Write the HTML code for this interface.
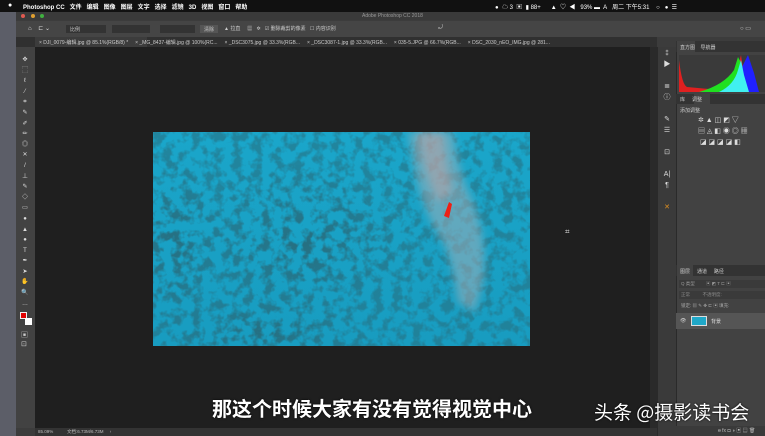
<!DOCTYPE html>
<html><head><meta charset="utf-8"><style>
*{margin:0;padding:0;box-sizing:border-box}
body{width:765px;height:436px;overflow:hidden;background:#5c5e68;font-family:"Liberation Sans","Noto Sans CJK SC",sans-serif;position:relative;color:#ccc}
.a{position:absolute}
.t{font-size:6px;white-space:nowrap}
</style></head><body>
<div class="a" style="left:0;top:0;width:765px;height:12px;background:#111"></div>
<div class="a t" style="left:8px;top:2px;color:#fff;font-size:7px">●</div>
<div class="a t" style="left:23px;top:2px;color:#fff;font-weight:bold">Photoshop CC&nbsp;&nbsp; 文件&nbsp;&nbsp; 编辑&nbsp;&nbsp; 图像&nbsp;&nbsp; 图层&nbsp;&nbsp; 文字&nbsp;&nbsp; 选择&nbsp;&nbsp; 滤镜&nbsp;&nbsp; 3D&nbsp;&nbsp; 视图&nbsp;&nbsp; 窗口&nbsp;&nbsp; 帮助</div>
<div class="a t" style="left:495px;top:2px;color:#fff">●&nbsp; ☁ 3&nbsp; ▣&nbsp; ▮ 88+&nbsp;&nbsp;&nbsp;&nbsp;&nbsp; ▲&nbsp; ♡&nbsp; ◀&nbsp;&nbsp; 93% ▬&nbsp; A&nbsp;&nbsp; 周二 下午5:31&nbsp;&nbsp;&nbsp; ○&nbsp;&nbsp; ●&nbsp; ☰</div>
<div class="a" style="left:16px;top:12px;width:749px;height:424px;background:#3c3c3c"></div>
<div class="a" style="left:16px;top:12px;width:749px;height:8px;background:#3a3a3a"></div>
<div class="a" style="left:21px;top:14px;width:4px;height:4px;border-radius:50%;background:#e05a50"></div>
<div class="a" style="left:31px;top:14px;width:4px;height:4px;border-radius:50%;background:#e0a030"></div>
<div class="a" style="left:40px;top:14px;width:4px;height:4px;border-radius:50%;background:#40b040"></div>
<div class="a t" style="left:362px;top:13px;font-size:5px;color:#999">Adobe Photoshop CC 2018</div>
<div class="a" style="left:16px;top:21px;width:749px;height:16px;background:#454545"></div>
<div class="a t" style="left:28px;top:25px;color:#ddd">⌂&nbsp;&nbsp;&nbsp; ⊏ ⌄</div>
<div class="a" style="left:66px;top:25px;width:40px;height:8px;background:#333"></div>
<div class="a" style="left:112px;top:25px;width:38px;height:8px;background:#333"></div>
<div class="a" style="left:160px;top:25px;width:35px;height:8px;background:#333"></div>
<div class="a t" style="left:70px;top:26px;font-size:5px">比例</div>
<div class="a" style="left:200px;top:25px;width:18px;height:8px;background:#555"></div>
<div class="a t" style="left:204px;top:26px;font-size:5px">清除</div>
<div class="a t" style="left:224px;top:25px;font-size:5px">▲ 拉直&nbsp;&nbsp;&nbsp;&nbsp; ▦&nbsp;&nbsp; ✲&nbsp;&nbsp; ☑ 删除裁剪的像素&nbsp;&nbsp; ☐ 内容识别</div>
<div class="a t" style="left:438px;top:25px">⤾</div>
<div class="a t" style="left:740px;top:25px">○ ▭</div>
<div class="a" style="left:16px;top:37px;width:641px;height:10px;background:#303030"></div>
<div class="a" style="left:35px;top:37px;width:112px;height:10px;background:#3c3c3c"></div>
<div class="a t" style="left:39px;top:39px;font-size:5px;color:#ccc">× DJI_0079-编辑.jpg @ 85.1%(RGB/8) *&nbsp;&nbsp;&nbsp;&nbsp; × _MG_8437-编辑.jpg @ 100%(RC...&nbsp;&nbsp;&nbsp;&nbsp; × _DSC3075.jpg @ 33.3%(RGB...&nbsp;&nbsp;&nbsp;&nbsp; × _DSC3087-1.jpg @ 33.3%(RGB...&nbsp;&nbsp;&nbsp;&nbsp; × 035-5.JPG @ 66.7%(RGB...&nbsp;&nbsp;&nbsp;&nbsp; × DSC_2030_nEO_IMG.jpg @ 281...</div>
<div class="a" style="left:16px;top:47px;width:19px;height:381px;background:#424242"></div>
<div class="a" style="left:18px;top:55px;width:14px;line-height:10.6px;font-size:6px;color:#ddd;text-align:center">✥<br>⬚<br>ℓ<br>⁄<br>⌗<br>✎<br>✐<br>✏<br>◎<br>✕<br>/<br>⊥<br>✎<br>◇<br>▭<br>●<br>▲<br>●<br>T<br>✒<br>➤<br>✋<br>🔍<br>…</div>
<div class="a" style="left:20px;top:312px;width:7px;height:7px;background:#e00000;border:1px solid #eee"></div>
<div class="a" style="left:25px;top:318px;width:7px;height:7px;background:#fff"></div>
<div class="a t" style="left:21px;top:330px;font-size:7px">▣<br>⊡</div>
<div class="a" style="left:35px;top:47px;width:622px;height:381px;background:#1f1f1f"></div>
<div class="a" style="left:650px;top:47px;width:7px;height:381px;background:#2a2a2a"></div>
<div class="a" style="left:153px;top:132px;width:377px;height:214px;overflow:hidden;background:linear-gradient(#1aa6ca,#189cc0)">
<svg class="a" style="left:0;top:0" width="377" height="214">
<defs>
<filter id="n" x="0" y="0" width="100%" height="100%">
<feTurbulence type="fractalNoise" baseFrequency="0.1" numOctaves="3" seed="4"/>
<feColorMatrix type="matrix" values="0 0 0 0 0.02  0 0 0 0 0.16  0 0 0 0 0.22  0 0 0 -4.5 2.5"/>
</filter>
<filter id="b"><feGaussianBlur stdDeviation="4"/></filter>
<radialGradient id="g"><stop offset="0" stop-color="#fff" stop-opacity="1"/><stop offset="1" stop-color="#fff" stop-opacity="0"/></radialGradient>
<mask id="m"><rect width="377" height="214" fill="#999"/>
<ellipse cx="150" cy="110" rx="110" ry="80" fill="url(#g)"/><ellipse cx="20" cy="110" rx="50" ry="90" fill="url(#g)"/><ellipse cx="110" cy="200" rx="110" ry="40" fill="url(#g)"/></mask>
</defs>
<rect width="377" height="214" filter="url(#n)" mask="url(#m)"/>
<path d="M255 0 L300 0 Q305 40 320 70 Q335 110 330 150 L322 180 L305 170 Q300 130 290 110 Q270 80 262 40Z" fill="#a8b0b8" opacity=".5" filter="url(#b)"/>
<path d="M265 0 L290 0 Q292 30 300 60 L285 70 Q270 40 265 0Z" fill="#c8a0a0" opacity=".45" filter="url(#b)"/>
<path d="M291 84 L296 70 L299 72 L296 86Z" fill="#ee2015"/>
</svg>
</div>
<div class="a t" style="left:565px;top:227px;color:#ddd;font-size:8px">⌗</div>
<div class="a" style="left:35px;top:428px;width:622px;height:8px;background:#333"></div>
<div class="a t" style="left:38px;top:429px;font-size:4.5px;color:#bbb">85.09%&nbsp;&nbsp;&nbsp;&nbsp;&nbsp;&nbsp;&nbsp;&nbsp;&nbsp;&nbsp; 文档:6.73M/6.73M&nbsp;&nbsp;&nbsp;&nbsp; ›</div>
<div class="a" style="left:657px;top:47px;width:19px;height:389px;background:#3a3a3a;border-left:1px solid #2a2a2a"></div>
<div class="a" style="left:660px;top:48px;width:14px;line-height:11px;font-size:7px;color:#ddd;text-align:center">⁑<br>▶<br><br>≣<br>ⓘ<br><br>✎<br>☰<br><br>⊡<br><br>A|<br>¶<br><br><span style="color:#e09020">✕</span></div>
<div class="a" style="left:676px;top:47px;width:89px;height:389px;background:#424242;border-left:1px solid #2a2a2a"></div>
<div class="a" style="left:676px;top:41px;width:89px;height:11px;background:#333"></div>
<div class="a" style="left:677px;top:41px;width:18px;height:11px;background:#424242"></div>
<div class="a t" style="left:680px;top:44px;font-size:5px">直方图&nbsp;&nbsp;&nbsp; 导航器</div>
<div class="a" style="left:679px;top:55px;width:86px;height:37px;background:#3a3a3a;overflow:hidden">
<svg width="86" height="37"><path d="M0 37 L0 5 Q3 30 8 32 L30 34 Q50 30 58 15 L62 0 L66 28 L70 37Z" fill="#e02020"/>
<path d="M20 37 Q45 30 55 15 L59 2 L63 10 L66 37Z" fill="#20e020"/>
<path d="M40 37 Q55 30 59 20 L64 10 L69 0 L75 18 L80 37Z" fill="#2020ff"/>
<path d="M40 37 Q55 30 59 15 L62 5 L65 20 L70 37Z" fill="#40f0f0"/></svg></div>
<div class="a" style="left:676px;top:94px;width:89px;height:10px;background:#333"></div>
<div class="a" style="left:694px;top:94px;width:16px;height:10px;background:#424242"></div>
<div class="a t" style="left:680px;top:96px;font-size:5px">库&nbsp;&nbsp;&nbsp;&nbsp; 调整</div>
<div class="a t" style="left:680px;top:107px;font-size:5px">添加调整</div>
<div class="a t" style="left:698px;top:115px;font-size:7px;line-height:11px;color:#ddd">✲ ▲ ◫ ◩ ▽<br>▤ ◬ ◧ ◉ ◎ ▦<br>&nbsp;◪ ◪ ◪ ◪ ◧</div>
<div class="a" style="left:676px;top:265px;width:89px;height:11px;background:#333"></div>
<div class="a" style="left:677px;top:265px;width:16px;height:11px;background:#424242"></div>
<div class="a t" style="left:680px;top:268px;font-size:5px">图层&nbsp;&nbsp;&nbsp;&nbsp; 通道&nbsp;&nbsp;&nbsp;&nbsp; 路径</div>
<div class="a" style="left:679px;top:280px;width:86px;height:8px;background:#3a3a3a"></div>
<div class="a t" style="left:681px;top:281px;font-size:4.5px;color:#999">Q 类型&nbsp;&nbsp;&nbsp;&nbsp;&nbsp;&nbsp;&nbsp;&nbsp; ▣ ◩ T ⊏ ▣</div>
<div class="a" style="left:679px;top:291px;width:86px;height:8px;background:#3a3a3a"></div>
<div class="a t" style="left:681px;top:292px;font-size:4.5px;color:#888">正常&nbsp;&nbsp;&nbsp;&nbsp;&nbsp;&nbsp;&nbsp;&nbsp;&nbsp; 不透明度:</div>
<div class="a t" style="left:681px;top:303px;font-size:4.5px;color:#aaa">锁定: ▦ ✎ ✥ ⊏ ▣ 填充:</div>
<div class="a" style="left:676px;top:313px;width:89px;height:16px;background:#555"></div>
<div class="a t" style="left:680px;top:318px;font-size:5px">👁</div>
<div class="a" style="left:691px;top:316px;width:16px;height:10px;background:#20a8c8;border:1px solid #ddd"></div>
<div class="a t" style="left:711px;top:318px;font-size:5px;color:#ddd">背景</div>
<div class="a" style="left:676px;top:426px;width:89px;height:10px;background:#3a3a3a"></div>
<div class="a t" style="left:718px;top:427px;font-size:5px;color:#bbb">ɵ fx ◘ ◑ ▣ ▤ 🗑</div>
<div class="a" style="left:212px;top:393px;font-size:20px;font-weight:bold;color:#fff;font-family:'Noto Sans CJK SC',sans-serif;white-space:nowrap;text-shadow:0 0 2px #000">那这个时候大家有没有觉得视觉中心</div>
<div class="a" style="left:594px;top:398px;font-size:19px;color:#fff;font-family:'Noto Sans CJK SC',sans-serif;white-space:nowrap;text-shadow:0 0 2px #000">头条 @摄影读书会</div>
</body></html>
